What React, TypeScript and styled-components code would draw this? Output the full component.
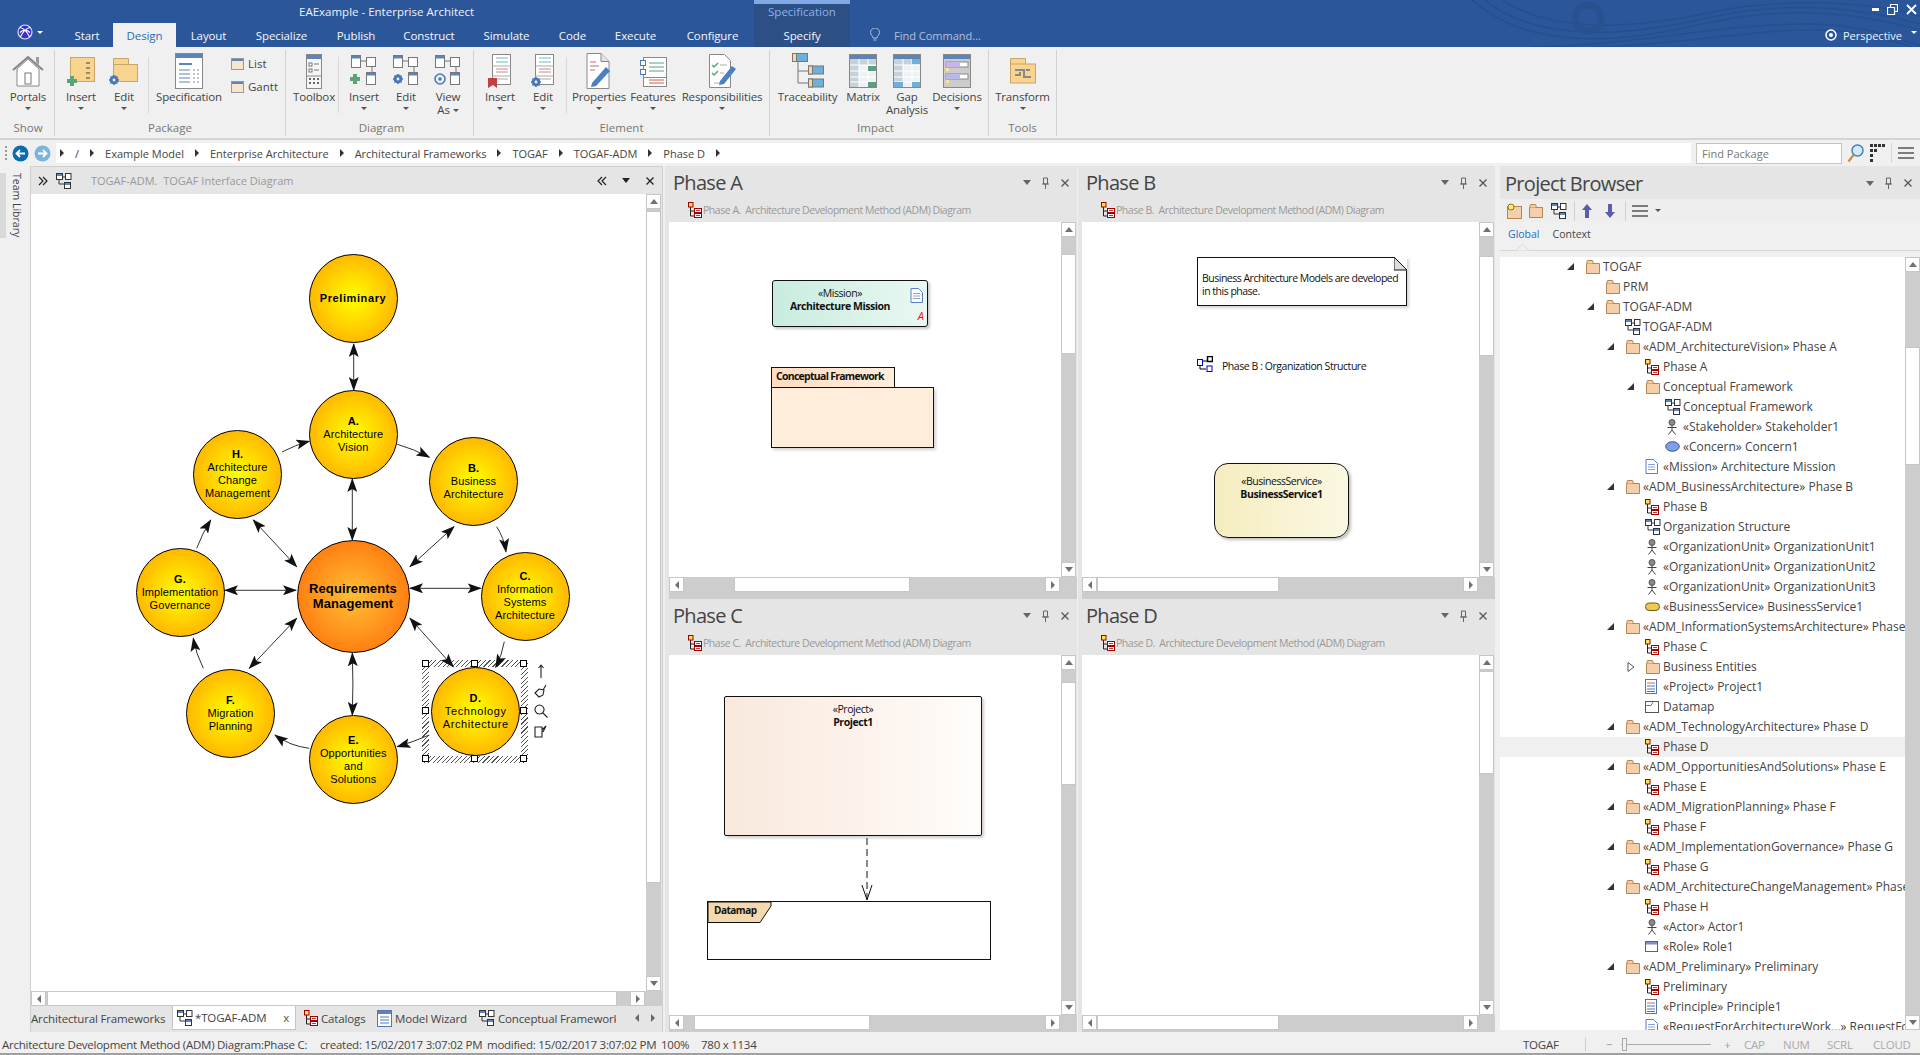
import React from "react";
import styled, { createGlobalStyle } from "styled-components";

const Global = createGlobalStyle`
  html, body {
    margin: 0;
    padding: 0;
    height: 100%;
    overflow: hidden;
    background: #f0f0f0;
    font-family: "Open Sans", "Noto Sans", sans-serif;
    font-size: 11.5px;
    color: #444;
  }
  * { box-sizing: border-box; }
  svg { display: block; flex-shrink: 0; }
`;

const Page = styled.div`
  width: 1920px;
  height: 1055px;
  display: flex;
  flex-direction: column;
  overflow: hidden;
`;

/* ---------- title bar ---------- */
const TitleBar = styled.div`
  position: relative;
  height: 47px;
  background: #2b579a;
  color: #fff;
  flex-shrink: 0;
`;
const Waves = styled.svg`
  position: absolute;
  right: 0;
  top: 0;
`;
const TitleRow = styled.div`
  position: relative;
  display: grid;
  grid-template-columns: 754px 96px 1fr;
  height: 23px;
`;
const AppTitle = styled.div`
  padding-left: 299px;
  line-height: 23px;
  font-size: 11.5px;
  color: #eef2f8;
`;
const ContextLabel = styled.div`
  background: #2c4f85;
  border-top: 4px solid #7fa8e4;
  text-align: center;
  line-height: 15px;
  font-size: 11.5px;
  color: #8fb2ea;
`;
const WindowButtons = styled.div`
  display: flex;
  justify-content: flex-end;
  align-items: center;
  gap: 8px;
  padding-right: 3px;
  height: 19px;
`;
const TabRow = styled.div`
  position: relative;
  display: flex;
  height: 24px;
`;
const LogoBox = styled.div`
  width: 61px;
  display: flex;
  padding-left: 17px;
  padding-top: 1px;
  gap: 4px;
`;
const LogoCaret = styled.div`
  width: 0;
  height: 0;
  margin-top: 7px;
  border-left: 3px solid transparent;
  border-right: 3px solid transparent;
  border-top: 3px solid #fff;
`;
const RibbonTab = styled.div<{ $w: number; $active?: boolean; $context?: boolean }>`
  width: ${(p) => p.$w}px;
  text-align: center;
  line-height: 26px;
  font-size: 11.5px;
  letter-spacing: -0.1px;
  color: ${(p) => (p.$active ? "#2b6cb8" : "#f4f6fa")};
  background: ${(p) => (p.$active ? "#f0f0f0" : p.$context ? "#2c4f85" : "transparent")};
`;
const FindCommand = styled.div`
  display: flex;
  align-items: center;
  gap: 14px;
  padding-left: 20px;
  color: #b3c0d8;
  font-size: 11px;
`;
const Perspective = styled.div`
  margin-left: auto;
  display: flex;
  align-items: center;
  gap: 6px;
  padding-right: 3px;
  font-size: 11px;
  color: #eef2f8;
`;
const PerspectiveCaret = styled(LogoCaret)`
  margin: -6px 0 0 3px;
`;

/* ---------- ribbon ---------- */
const Ribbon = styled.div`
  height: 93px;
  flex-shrink: 0;
  display: flex;
  padding-top: 3px;
  background: #f0f0f0;
  border-bottom: 2px solid #d4d4d4;
`;
const Group = styled.div<{ $pad?: number; $end?: number }>`
  height: 86px;
  display: flex;
  flex-direction: column;
  border-right: 1px solid #d2d2d2;
  padding-left: ${(p) => p.$pad ?? 0}px;
  padding-right: ${(p) => p.$end ?? 0}px;
`;
const GroupBody = styled.div`
  flex: 1;
  display: flex;
`;
const GroupLabel = styled.div`
  height: 12px;
  line-height: 12px;
  margin-bottom: 2px;
  text-align: center;
  font-size: 11.5px;
  color: #777;
`;
const InnerRule = styled.div<{ $gap?: number }>`
  width: 1px;
  height: 56px;
  margin-top: 7px;
  margin-left: ${(p) => p.$gap ?? 0}px;
  background: #d8d8d8;
`;
const ToolButton = styled.div<{ $w: number }>`
  width: ${(p) => p.$w}px;
  display: flex;
  flex-direction: column;
  align-items: center;
  padding-top: 5px;
`;
const IconSlot = styled.div`
  height: 32px;
  display: flex;
  align-items: center;
  justify-content: center;
`;
const ToolLabel = styled.div`
  margin-top: 3px;
  text-align: center;
  line-height: 13px;
  font-size: 11.5px;
  letter-spacing: -0.15px;
  white-space: nowrap;
`;
const Caret = styled.div`
  width: 0;
  height: 0;
  margin-top: 4px;
  border-left: 3px solid transparent;
  border-right: 3px solid transparent;
  border-top: 3px solid #555;
`;
const InlineCaret = styled(Caret)`
  display: inline-block;
  margin: 0 0 2px 3px;
`;
const SmallTools = styled.div`
  width: 56px;
  display: flex;
  flex-direction: column;
  padding-top: 2px;
`;
const SmallTool = styled.div`
  height: 23px;
  display: flex;
  align-items: center;
  gap: 4px;
  padding-left: 2px;
`;

/* ---------- breadcrumb bar ---------- */
const AddressBar = styled.div`
  height: 26px;
  flex-shrink: 0;
  display: flex;
  align-items: center;
  background: #f0f0f0;
`;
const Grip = styled.div`
  width: 2px;
  height: 14px;
  margin: 0 5px 0 5px;
  background: repeating-linear-gradient(to bottom, #9a9a9a 0 2px, transparent 2px 4px);
`;
const NavButtons = styled.div`
  width: 44px;
  display: flex;
  gap: 5px;
`;
const Crumbs = styled.div`
  width: 1635px;
  height: 20px;
  display: flex;
  align-items: center;
  gap: 11px;
  padding-left: 4px;
  background: #fff;
  font-size: 11px;
`;
const CrumbArrow = styled.div`
  width: 0;
  height: 0;
  border-top: 4px solid transparent;
  border-bottom: 4px solid transparent;
  border-left: 4px solid #333;
`;
const FindBox = styled.div`
  width: 146px;
  height: 21px;
  margin-left: 5px;
  padding-left: 5px;
  line-height: 19px;
  background: #fff;
  border: 1px solid #c4c4c4;
  color: #777;
  font-size: 11px;
`;
const AddressTools = styled.div`
  display: flex;
  align-items: center;
  gap: 6px;
  padding-left: 5px;
`;
const AddressRule = styled.div`
  width: 1px;
  height: 20px;
  background: #d6d6d6;
`;

/* ---------- workspace ---------- */
const Workspace = styled.div`
  height: 866px;
  flex-shrink: 0;
  display: flex;
`;
const SideRail = styled.div`
  width: 30px;
  flex-shrink: 0;
  display: flex;
  padding-top: 7px;
`;
const RailStrip = styled.div`
  width: 6px;
  height: 65px;
  background: #d9d9d9;
`;
const RailText = styled.div`
  writing-mode: vertical-rl;
  height: 70px;
  margin-left: 5px;
  line-height: 12px;
  font-size: 10.5px;
  color: #444;
  white-space: nowrap;
`;
const DiagramPanel = styled.div`
  width: 633px;
  flex-shrink: 0;
  display: flex;
  flex-direction: column;
  background: #e5e5e5;
  border: 1px solid #cfcfcf;
  border-bottom: none;
  padding-bottom: 2px;
`;
const DiagramHeader = styled.div`
  height: 27px;
  flex-shrink: 0;
  display: flex;
  align-items: center;
  padding-left: 7px;
  color: #999;
`;
const HeaderIcon = styled.div`
  margin-left: 8px;
`;
const HeaderPath = styled.span`
  margin-left: 19px;
  font-size: 11px;
  white-space: pre;
`;
const HeaderEnd = styled.div`
  margin-left: auto;
  display: flex;
  align-items: center;
  gap: 15px;
  padding-right: 7px;
`;
const DiagramBody = styled.div`
  flex: 1;
  min-height: 0;
  display: flex;
  padding-right: 1px;
`;
const MainCanvas = styled.div`
  position: relative;
  flex: 1;
  background: #fff;
  overflow: hidden;
`;
const ArrowLayer = styled.svg`
  position: absolute;
  left: 0;
  top: 0;
`;
const Bubble = styled.div<{ $x: number; $y: number; $d: number; $core?: boolean }>`
  position: absolute;
  left: ${(p) => p.$x - 31 - p.$d / 2}px;
  top: ${(p) => p.$y - 194 - p.$d / 2}px;
  width: ${(p) => p.$d}px;
  height: ${(p) => p.$d}px;
  padding-bottom: ${(p) => (p.$core ? 2 : 0)}px;
  border-radius: 50%;
  border: 1px solid #000;
  background: ${(p) =>
    p.$core
      ? "radial-gradient(circle closest-side, #ffc035 0%, #ff8012 100%)"
      : "radial-gradient(circle closest-side, #ffff00 0%, #ffb900 100%)"};
  display: flex;
  flex-direction: column;
  align-items: center;
  justify-content: center;
  font-family: "Liberation Sans", Arial, sans-serif;
  font-size: ${(p) => (p.$core ? 13 : 11)}px;
  line-height: ${(p) => (p.$core ? 15 : 13)}px;
  color: #000;
`;
const BubbleLine = styled.div<{ $bold?: boolean; $wide?: boolean }>`
  font-weight: ${(p) => (p.$bold ? 700 : 400)};
  letter-spacing: ${(p) => (p.$wide ? 0.6 : 0.1)}px;
  white-space: nowrap;
`;
const SelectionFrame = styled.div`
  position: absolute;
  left: 391px;
  top: 466px;
  width: 106px;
  height: 103px;
  background: repeating-linear-gradient(135deg, #555 0 0.8px, #fff 0.8px 3.2px);
  &::after {
    content: "";
    position: absolute;
    inset: 7px;
    background: #fff;
  }
`;
const Handle = styled.div<{ $x: number; $y: number }>`
  position: absolute;
  left: ${(p) => p.$x - 31 - 4}px;
  top: ${(p) => p.$y - 194 - 4}px;
  width: 7px;
  height: 7px;
  background: #fff;
  border: 1px solid #000;
`;
const QuickTools = styled.div`
  position: absolute;
  left: 503px;
  top: 470px;
  display: flex;
  flex-direction: column;
  gap: 6px;
`;
const DocTabs = styled.div`
  height: 24px;
  flex-shrink: 0;
  display: flex;
  align-items: stretch;
  color: #444;
  font-size: 11.5px;
  letter-spacing: -0.15px;
`;
const DocTab = styled.div<{ $w: number; $active?: boolean; $pad?: number }>`
  width: ${(p) => p.$w}px;
  flex-shrink: 0;
  display: flex;
  align-items: center;
  gap: ${(p) => (p.$active ? 2 : 3)}px;
  white-space: nowrap;
  overflow: hidden;
  padding-left: ${(p) => p.$pad ?? 0}px;
  background: ${(p) => (p.$active ? "#fff" : "transparent")};
  border: ${(p) => (p.$active ? "1px solid #c4c4c4" : "none")};
  border-top: none;
`;
const DocTabClose = styled.span`
  margin-left: auto;
  padding-right: 6px;
  color: #555;
`;
const TabArrows = styled.div`
  margin-left: auto;
  display: flex;
  align-items: center;
  gap: 12px;
  padding-right: 7px;
`;

/* ---------- phases ---------- */
const PhaseGrid = styled.div`
  width: 830px;
  margin-left: 2px;
  flex-shrink: 0;
  display: grid;
  grid-template-columns: 412px 417px;
  grid-template-rows: 433px 433px;
  column-gap: 1px;
`;
const PhasePanel = styled.div`
  display: flex;
  flex-direction: column;
  background: #e5e5e5;
`;
const PanelCore = styled.div<{ $bottom: number }>`
  flex: 1;
  min-height: 0;
  display: flex;
  flex-direction: column;
  margin-left: 4px;
  background: #cdcdcd;
  padding-bottom: ${(p) => p.$bottom}px;
`;
const PanelTitleRow = styled.div<{ $left: number }>`
  height: 31px;
  flex-shrink: 0;
  display: flex;
  align-items: center;
  padding: 2px 7px 0 ${(p) => p.$left}px;
  background: #e5e5e5;
`;
const PanelTitle = styled.div`
  font-size: 20px;
  letter-spacing: -0.7px;
  color: #444;
`;
const PanelControls = styled.div`
  margin-left: auto;
  display: flex;
  align-items: center;
  gap: 10px;
`;
const PanelSub = styled.div`
  height: 25px;
  flex-shrink: 0;
  display: flex;
  align-items: center;
  gap: 1px;
  padding-left: 23px;
  background: #e5e5e5;
  color: #999;
  font-size: 10.5px;
  letter-spacing: -0.47px;
  white-space: pre;
`;
const PanelBody = styled.div`
  flex: 1;
  min-height: 0;
  display: flex;
  padding-right: 1px;
  background: #e5e5e5;
`;
const PhaseCanvas = styled.div`
  position: relative;
  flex: 1;
  background: #fff;
  overflow: hidden;
`;
const VBar = styled.div`
  width: 15px;
  flex-shrink: 0;
  display: flex;
  flex-direction: column;
  background: #cdcdcd;
`;
const HBar = styled.div`
  height: 15px;
  flex-shrink: 0;
  display: flex;
  background: #cdcdcd;
`;
const ScrollButton = styled.div`
  width: 15px;
  height: 15px;
  flex-shrink: 0;
  display: flex;
  align-items: center;
  justify-content: center;
  background: #fff;
  border: 1px solid #c6c6c6;
`;
const VThumb = styled.div<{ $gap: number; $size: number }>`
  margin-top: ${(p) => p.$gap}px;
  height: ${(p) => p.$size}px;
  background: #fff;
  border: 1px solid #c6c6c6;
`;
const HThumb = styled.div<{ $gap: number; $size: number }>`
  margin-left: ${(p) => p.$gap}px;
  width: ${(p) => p.$size}px;
  background: #fff;
  border: 1px solid #c6c6c6;
`;
const Fill = styled.div`
  flex: 1;
`;
const HCorner = styled.div`
  width: 17px;
  flex-shrink: 0;
`;
const Tri = styled.div<{ $dir: "up" | "down" | "left" | "right"; $color?: string }>`
  width: 0;
  height: 0;
  ${(p) => {
    const c = p.$color ?? "#707070";
    if (p.$dir === "up") return `border-left:4px solid transparent;border-right:4px solid transparent;border-bottom:5px solid ${c};`;
    if (p.$dir === "down") return `border-left:4px solid transparent;border-right:4px solid transparent;border-top:5px solid ${c};`;
    if (p.$dir === "left") return `border-top:4px solid transparent;border-bottom:4px solid transparent;border-right:4px solid ${c};`;
    return `border-top:4px solid transparent;border-bottom:4px solid transparent;border-left:4px solid ${c};`;
  }}
`;

/* ---------- diagram elements ---------- */
const nodeText = `
  font-size: 10.5px;
  letter-spacing: -0.45px;
  color: #111;
  line-height: 13px;
`;
const Stereotype = styled.div`
  ${nodeText}
  text-align: center;
`;
const ElementName = styled.div`
  ${nodeText}
  font-weight: 700;
  text-align: center;
`;
const MissionBox = styled.div`
  position: absolute;
  left: 103px;
  top: 58px;
  width: 156px;
  height: 47px;
  padding: 6px 20px 0 0;
  border: 1px solid #111;
  border-radius: 3px;
  background: linear-gradient(to right, #c9ecdf, #e9f8f2);
  box-shadow: 2px 2px 3px rgba(0, 0, 0, 0.22);
`;
const MissionDoc = styled.div`
  position: absolute;
  right: 4px;
  top: 7px;
`;
const MissionFlag = styled.div`
  position: absolute;
  right: 3px;
  bottom: 4px;
  font-size: 11px;
  line-height: 12px;
  font-style: italic;
  color: #e11;
`;
const PackageTab = styled.div`
  position: absolute;
  left: 102px;
  top: 145px;
  width: 124px;
  height: 21px;
  padding-left: 4px;
  border: 1px solid #111;
  background: linear-gradient(to right, #ffdcbf, #ffeedd);
  ${nodeText}
  font-weight: 700;
  letter-spacing: -0.72px;
  line-height: 16px;
`;
const PackageBody = styled.div`
  position: absolute;
  left: 102px;
  top: 165px;
  width: 163px;
  height: 61px;
  border: 1px solid #111;
  background: #ffeddc;
  box-shadow: 2px 2px 3px rgba(0, 0, 0, 0.18);
`;
const NoteBox = styled.div`
  position: absolute;
  left: 115px;
  top: 35px;
  width: 210px;
  height: 49px;
  padding: 14px 4px 0 4px;
  border: 1px solid #111;
  background: #fff;
  box-shadow: 2px 2px 3px rgba(0, 0, 0, 0.18);
  ${nodeText}
  letter-spacing: -0.5px;
  white-space: nowrap;
`;
const NoteFold = styled.svg`
  position: absolute;
  right: -1px;
  top: -1px;
`;
const DiagramLink = styled.div`
  position: absolute;
  left: 115px;
  top: 133px;
  display: flex;
  align-items: center;
  gap: 9px;
  ${nodeText}
`;
const LinkText = styled.span`
  padding-top: 5px;
`;
const ServiceBox = styled.div`
  position: absolute;
  left: 132px;
  top: 241px;
  width: 135px;
  height: 75px;
  padding-top: 11px;
  border: 1px solid #111;
  border-radius: 14px;
  background: linear-gradient(to right, #f5edc0, #fbf8e2);
  box-shadow: 2px 2px 3px rgba(0, 0, 0, 0.25);
`;
const ProjectBox = styled.div`
  position: absolute;
  left: 55px;
  top: 41px;
  width: 258px;
  height: 140px;
  padding-top: 6px;
  border: 1px solid #111;
  border-radius: 2px;
  background: linear-gradient(to right, #f9e8dc, #fffcfa);
  box-shadow: 2px 2px 3px rgba(0, 0, 0, 0.2);
`;
const ArtifactFrame = styled.div`
  position: absolute;
  left: 38px;
  top: 246px;
  width: 284px;
  height: 59px;
  border: 1px solid #111;
  background: #fff;
`;
const ArtifactTag = styled.svg`
  position: absolute;
  left: 0;
  top: 0;
`;
const ArtifactName = styled.div`
  position: absolute;
  left: 6px;
  top: 2px;
  ${nodeText}
  font-weight: 700;
  font-size: 10px;
  letter-spacing: -0.5px;
`;
const DependencyLine = styled.svg`
  position: absolute;
  left: 190px;
  top: 183px;
`;

/* ---------- project browser ---------- */
const Browser = styled.div`
  width: 420px;
  margin-left: 5px;
  flex-shrink: 0;
  display: flex;
  flex-direction: column;
  background: #f0f0f0;
  padding-bottom: 2px;
`;
const BrowserTitle = styled(PanelTitleRow)`
  height: 33px;
  padding-bottom: 1px;
`;
const BrowserTools = styled.div`
  height: 23px;
  flex-shrink: 0;
  display: flex;
  align-items: center;
  padding-left: 6px;
  background: #eeeeee;
`;
const ToolSlot = styled.div<{ $w: number }>`
  width: ${(p) => p.$w}px;
  flex-shrink: 0;
  display: flex;
  align-items: center;
  justify-content: center;
`;
const ToolRule = styled.div`
  width: 1px;
  height: 20px;
  background: #d0d0d0;
`;
const SmallCaret = styled(Caret)`
  margin-top: 0;
`;
const BrowserTabs = styled.div`
  height: 29px;
  flex-shrink: 0;
  position: relative;
  display: flex;
  align-items: center;
  gap: 13px;
  padding: 0 0 4px 8px;
  border-bottom: 1px solid #d6d6d6;
`;
const BrowserTab = styled.span<{ $active?: boolean }>`
  font-size: 10.5px;
  color: ${(p) => (p.$active ? "#1e6fc8" : "#444")};
`;
const TabNotch = styled.svg`
  position: absolute;
  left: 16px;
  bottom: -1px;
`;
const TreeArea = styled.div`
  flex: 1;
  min-height: 0;
  margin-top: 6px;
  display: flex;
  background: #fff;
`;
const Tree = styled.div`
  flex: 1;
  min-width: 0;
  overflow: hidden;
`;
const TreeRow = styled.div<{ $level: number; $current?: boolean }>`
  height: 20px;
  display: flex;
  align-items: center;
  padding-bottom: 1px;
  padding-left: ${(p) => 65 + p.$level * 20}px;
  background: ${(p) => (p.$current ? "#f0f0f0" : "transparent")};
  font-size: 12px;
  color: #444;
  white-space: nowrap;
`;
const ToggleSlot = styled.div`
  width: 20px;
  flex-shrink: 0;
  display: flex;
  padding-left: 2px;
`;
const NodeIcon = styled.div`
  width: 18px;
  flex-shrink: 0;
  display: flex;
`;
const OpenToggle = styled.div`
  width: 0;
  height: 0;
  border-left: 7px solid transparent;
  border-bottom: 7px solid #333;
`;

/* ---------- status bar ---------- */
const StatusBar = styled.div`
  height: 21px;
  flex-shrink: 0;
  display: flex;
  align-items: center;
  padding: 3px 0 0 2px;
  font-size: 11.5px;
  letter-spacing: -0.25px;
  color: #444;
  background: #f0f0f0;
  white-space: nowrap;
`;
const StatusCell = styled.div<{ $w: number; $muted?: boolean }>`
  width: ${(p) => p.$w}px;
  flex-shrink: 0;
  color: ${(p) => (p.$muted ? "#aaa" : "inherit")};
`;
const StatusRule = styled.div`
  width: 1px;
  height: 13px;
  margin-right: 20px;
  background: #ccc;
`;
const Zoomer = styled.div`
  width: 138px;
  display: flex;
  align-items: center;
  flex-shrink: 0;
  color: #999;
`;
const ZoomLine = styled.div`
  position: relative;
  width: 90px;
  height: 1px;
  margin: 0 13px 0 9px;
  background: #aaa;
`;
const ZoomThumb = styled.div`
  position: absolute;
  left: 1px;
  top: -6px;
  width: 5px;
  height: 13px;
  background: #f0f0f0;
  border: 1px solid #aaa;
`;
const BottomEdge = styled.div`
  height: 2px;
  flex-shrink: 0;
  background: #a0a0a0;
`;

/* ---------- icons ---------- */
const TreeFolder = () => (
  <svg width="16" height="14" viewBox="0 0 16 14">
    <path d="M1.5 13.5V3.5h13v10z" fill="#f5cfa9" stroke="#b5844f" />
    <path d="M2 3.5V1.5q0-1 1-1h4q1 0 1 1v2" fill="#f5cfa9" stroke="#b5844f" />
  </svg>
);
const TreeDiagram = () => (
  <svg width="16" height="16" viewBox="0 0 16 16">
    <path d="M5 4h5M3 7v4h5M12 7v0" stroke="#333" fill="none" />
    <rect x="0.5" y="0.5" width="6" height="6" fill="#fff" stroke="#333" />
    <rect x="1" y="1" width="5" height="2" fill="#5b85c8" />
    <rect x="9.5" y="0.5" width="5.5" height="6" fill="#fff" stroke="#333" />
    <rect x="8.5" y="9.5" width="6" height="6" fill="#fff" stroke="#333" />
    <rect x="9" y="10" width="5" height="2" fill="#5b85c8" />
  </svg>
);
const RedTree = () => (
  <svg width="14" height="16" viewBox="0 0 14 16">
    <path d="M2.5 5v9h4M2.5 9h4" fill="none" stroke="#222" />
    <rect x="0.5" y="0.5" width="4.5" height="4.5" fill="#ffe34d" stroke="#a00000" />
    <rect x="6.5" y="6.5" width="7" height="4" fill="#fff" stroke="#a00000" />
    <rect x="6.5" y="11.5" width="7" height="4" fill="#fff" stroke="#a00000" />
    <path d="M8 8.5h4M8 13.5h4" stroke="#c33" />
  </svg>
);
const ActorIcon = () => (
  <svg width="14" height="16" viewBox="0 0 14 16">
    <circle cx="7" cy="3.5" r="3" fill="#8a8a8a" stroke="#555" />
    <path d="M7 6.500V11M2.500 8.500h9M7 11l-3.500 4.500M7 11l3.500 4.500" stroke="#444" fill="none" />
  </svg>
);
const EllipseIcon = () => (
  <svg width="15" height="11" viewBox="0 0 15 11">
    <ellipse cx="7.5" cy="5.5" rx="6.8" ry="4.8" fill="#7f9fe4" stroke="#3a4fa0" />
  </svg>
);
const PillIcon = () => (
  <svg width="15" height="11" viewBox="0 0 15 11">
    <rect x="0.5" y="2" width="14" height="7.5" rx="3.7" fill="#f0c850" stroke="#6a5a20" />
  </svg>
);
const DocIcon = () => (
  <svg width="13" height="15" viewBox="0 0 13 15">
    <path d="M1 .5h7.500l4 4v10H1z" fill="#fff" stroke="#5b7fc4" />
    <path d="M3 5.500h7M3 8h7M3 10.500h7" stroke="#8aa4d8" />
  </svg>
);
const ListDocIcon = () => (
  <svg width="12" height="15" viewBox="0 0 12 15">
    <rect x="0.5" y="0.5" width="11" height="14" fill="#fff" stroke="#4a78c0" />
    <path d="M2 4h8" stroke="#c66" />
    <path d="M2 7h8M2 10h8M2 12.500h8" stroke="#4a78c0" />
  </svg>
);
const WizardIcon = () => (
  <svg width="15" height="17" viewBox="0 0 15 17">
    <rect x="0.5" y="0.5" width="14" height="16" fill="#fff" stroke="#4a78c0" />
    <rect x="1" y="1" width="13" height="3" fill="#6a7fb0" />
    <path d="M3 7h9M3 10h9M3 13h9" stroke="#4a78c0" />
  </svg>
);
const FrameIcon = () => (
  <svg width="14" height="12" viewBox="0 0 14 12">
    <rect x="0.5" y="0.5" width="13" height="11" fill="#fff" stroke="#555" />
    <path d="M1 4.500h5l2-3.500" fill="none" stroke="#777" />
  </svg>
);
const RoleIcon = () => (
  <svg width="14" height="12" viewBox="0 0 14 12">
    <rect x="0.5" y="0.5" width="12" height="10" fill="#fff" stroke="#4a60a8" />
    <rect x="1" y="1" width="11" height="2.5" fill="#7f8fd0" />
  </svg>
);

const HouseIcon = () => (
  <svg width="32" height="32" viewBox="0 0 32 32">
    <path d="M5 14v17h22V14L16 4z" fill="#fff" stroke="#888" />
    <path d="M1 15 16 2l15 13" fill="none" stroke="#858585" strokeWidth="2" />
    <path d="M24 7V2h3v8" fill="#9a9a9a" />
    <rect x="13" y="18" width="6" height="11" fill="none" stroke="#777" />
  </svg>
);
const Plus = ({ x, y }: { x: number; y: number }) => (
  <path d={`M${x + 3} ${y}h4v3h3v4h-3v3h-4v-3h-3v-4h3z`} fill="#5ba47a" />
);
const Gear = ({ x, y }: { x: number; y: number }) => (
  <g>
    <circle cx={x + 5} cy={y + 5} r="3.2" fill="none" stroke="#4a78b8" strokeWidth="2.4" />
    <path d={`M${x + 5} ${y}v10M${x} ${y + 5}h10M${x + 1.5} ${y + 1.5}l7 7M${x + 8.5} ${y + 1.5}l-7 7`} stroke="#4a78b8" strokeWidth="1.4" />
    <circle cx={x + 5} cy={y + 5} r="1.4" fill="#f0f0f0" />
  </g>
);
const PackageAdd = () => (
  <svg width="28" height="30" viewBox="0 0 28 30">
    <rect x="3.5" y="1.5" width="24" height="24" fill="#f9d48f" stroke="#c7a66c" />
    <path d="M19 7h4M19 12h4M19 17h4M19 22h4" stroke="#9a8a6a" strokeWidth="2" />
    <Plus x={0} y={20} />
  </svg>
);
const PackageEdit = () => (
  <svg width="30" height="30" viewBox="0 0 30 30">
    <path d="M4.500 8V2.500h15V8" fill="#f9d48f" stroke="#c7a66c" />
    <rect x="4.5" y="8.5" width="24" height="17" fill="#f9d48f" stroke="#c7a66c" />
    <Gear x={0} y={19} />
  </svg>
);
const SpecIcon = () => (
  <svg width="28" height="36" viewBox="0 0 28 36">
    <rect x="0.5" y="0.5" width="27" height="35" fill="#fff" stroke="#888" />
    <rect x="1" y="1" width="26" height="4" fill="#5b85b8" />
    <path d="M4 11h13" stroke="#5b85b8" strokeWidth="2" />
    <path d="M4 17h11M4 21h11M4 25h11M4 29h11" stroke="#5b85b8" />
    <path d="M18 17h2M22 17h2M18 21h2M22 21h2M18 25h2M22 25h2M18 29h2M22 29h2" stroke="#888" />
  </svg>
);
const MiniWindow = () => (
  <svg width="13" height="12" viewBox="0 0 13 12">
    <rect x="0.5" y="0.5" width="12" height="11" fill="#f5e6cc" stroke="#999" />
    <rect x="1" y="1" width="11" height="2" fill="#5b85b8" />
  </svg>
);
const ToolboxIcon = () => (
  <svg width="16" height="35" viewBox="0 0 16 35">
    <rect x="0.5" y="0.5" width="15" height="34" fill="#f5f5f5" stroke="#888" />
    <rect x="1" y="1" width="14" height="4" fill="#5b85b8" />
    <rect x="3" y="9" width="3" height="3" fill="#fff" stroke="#777" />
    <rect x="3" y="15" width="3" height="3" fill="#fff" stroke="#777" />
    <path d="M8 10h5M8 16h5" stroke="#777" />
    <path d="M1 22h14" stroke="#888" />
    <path d="M3 25h2M7 25h2M11 25h2M3 29h2M7 29h2M11 29h2" stroke="#666" strokeWidth="2" />
  </svg>
);
const DiagramBig = ({ children }: { children?: React.ReactNode }) => (
  <svg width="28" height="32" viewBox="0 0 28 32">
    <path d="M10 6h6M22 12v5" stroke="#777" fill="none" />
    <rect x="1.5" y="0.5" width="9" height="12" fill="#fff" stroke="#777" />
    <rect x="2" y="1" width="8" height="2.5" fill="#5b85b8" />
    <rect x="16.5" y="2.5" width="9" height="9" fill="#fff" stroke="#777" />
    <rect x="16.5" y="17.5" width="9" height="12" fill="#fff" stroke="#777" />
    <rect x="17" y="18" width="8" height="2.5" fill="#5b85b8" />
    {children}
  </svg>
);
const Target = () => (
  <g>
    <circle cx="6" cy="24" r="5" fill="none" stroke="#4a78b8" strokeWidth="1.6" />
    <circle cx="6" cy="24" r="1.8" fill="#4a78b8" />
  </g>
);
const ElementBig = ({ children }: { children?: React.ReactNode }) => (
  <svg width="24" height="34" viewBox="0 0 24 34">
    <rect x="4.5" y="0.5" width="18" height="30" fill="#fff" stroke="#888" />
    <path d="M4.500 12h18M4.500 22h18" stroke="#aaa" />
    <path d="M8 4h12M8 8h12" stroke="#70b8c0" />
    <path d="M8 15h12M8 18h12" stroke="#c88" />
    <path d="M8 25h12" stroke="#aaa" />
    {children}
  </svg>
);
const PropertiesIcon = () => (
  <svg width="26" height="36" viewBox="0 0 26 36">
    <path d="M1 .5h14l8 8v27H1z" fill="#fff" stroke="#888" />
    <path d="M15 .5v8h8" fill="#e4e4e4" stroke="#888" />
    <path d="M4 9h6M4 13h9M4 17h5" stroke="#c66" />
    <path d="M6 30 20 14l4 4L10 33l-5 1z" fill="#4a80c0" />
  </svg>
);
const FeaturesIcon = () => (
  <svg width="27" height="33" viewBox="0 0 27 33">
    <rect x="3.5" y="2.5" width="23" height="29" fill="#fff" stroke="#888" />
    <path d="M3.500 22.500h23" stroke="#888" />
    <path d="M9 8h15M9 12h15M9 16h15" stroke="#5ba47a" />
    <path d="M9 25h15M9 28h15" stroke="#d0604a" />
    <rect x="0.5" y="5.5" width="5" height="5" fill="#fff" stroke="#4a78b8" />
    <rect x="0.5" y="14.5" width="5" height="5" fill="#fff" stroke="#4a78b8" />
  </svg>
);
const ResponsIcon = () => (
  <svg width="27" height="34" viewBox="0 0 27 34">
    <path d="M.5.5h15l6 6v27H.5z" fill="#fff" stroke="#888" />
    <path d="M3 11l2 2 4-4M3 19l2 2 4-4" fill="none" stroke="#5ba47a" strokeWidth="1.5" />
    <path d="M11 11h7M11 19h4M5 29h10" stroke="#aaa" />
    <path d="M11 27 23 12l4 3L15 30l-5 1z" fill="#4a80c0" />
  </svg>
);
const TraceIcon = () => (
  <svg width="32" height="36" viewBox="0 0 32 36">
    <path d="M6 9v21h10M6 18h10" fill="none" stroke="#777" />
    <rect x="0.5" y="0.5" width="15" height="8" fill="#6fb0d8" stroke="#777" />
    <rect x="0.5" y="0.5" width="4" height="8" fill="#f5d9a0" stroke="#777" />
    <rect x="16.5" y="13" width="15" height="8" fill="#6fb0d8" stroke="#777" />
    <rect x="16.5" y="13" width="4" height="8" fill="#f5d9a0" stroke="#777" />
    <rect x="16.5" y="26" width="15" height="8" fill="#6fb0d8" stroke="#777" />
    <rect x="16.5" y="26" width="4" height="8" fill="#f5d9a0" stroke="#777" />
  </svg>
);
const MatrixGrid = ({ mark, corner }: { mark: string; corner?: boolean }) => (
  <svg width="28" height="34" viewBox="0 0 28 34">
    <rect x="0.5" y="0.5" width="27" height="33" fill="#eef2f4" stroke="#888" />
    <rect x="1" y="1" width="26" height="4" fill="#5b85b8" />
    <rect x="1" y="5" width="26" height="6" fill="#c5d2da" />
    <rect x="1" y="5" width="9" height="28" fill="#c5d2da" />
    <path d="M10 5v28M19 5v28M1 11h26M1 17h26M1 23h26M1 28h26" stroke="#fff" />
    <rect x="19" y={corner ? 5 : 12} width="8" height="5" fill={mark} />
    <rect x="19" y="28" width="8" height="5" fill={mark} />
    {corner && <rect x="1" y="28" width="9" height="5" fill={mark} />}
  </svg>
);
const DecisionIcon = () => (
  <svg width="28" height="34" viewBox="0 0 28 34">
    <rect x="0.5" y="0.5" width="27" height="33" fill="#ccc" stroke="#888" />
    <rect x="1" y="1" width="26" height="4" fill="#5b85b8" />
    <rect x="3" y="8" width="22" height="5" fill="#fff" stroke="#888" />
    <rect x="3" y="8" width="14" height="5" fill="#c8b4e8" />
    <rect x="3" y="20" width="22" height="5" fill="#fff" stroke="#888" />
    <rect x="3" y="20" width="14" height="5" fill="#b8b8e8" />
    <rect x="3" y="14" width="3" height="3" fill="#f5e890" />
    <rect x="3" y="26" width="3" height="3" fill="#f5e890" />
  </svg>
);
const TransformIcon = () => (
  <svg width="26" height="26" viewBox="0 0 26 26">
    <path d="M.5 6V.5h15V6" fill="#f9d48f" stroke="#c7a66c" />
    <rect x="0.5" y="6" width="25" height="19" fill="#f9d48f" stroke="#c7a66c" />
    <path d="M5 12h9v7h7M5 17h5v-3M16 12h4" fill="none" stroke="#888" strokeWidth="2" />
  </svg>
);
const LogoIcon = () => (
  <svg width="16" height="16" viewBox="0 0 16 16">
    <circle cx="8" cy="8" r="7" fill="#3a2fd0" stroke="#d8e4ff" strokeWidth="1.2" />
    <path d="M3 3.500c6 1.500 8 6 9.500 9.500M13 3.500c-6 1.500-8 6-9.500 9.500M3 8.500c3-3 7-3 10 0" stroke="#fff" strokeWidth="1.2" fill="none" />
  </svg>
);
const BulbIcon = () => (
  <svg width="10" height="14" viewBox="0 0 10 14">
    <path d="M3 10c0-2-2.500-3-2.500-5.500a4.500 4.500 0 0 1 9 0C9.500 7 7 8 7 10zM3.500 12h3" fill="none" stroke="#b3c0d8" />
  </svg>
);
const SmallClose = ({ color = "#555" }: { color?: string }) => (
  <svg width="10" height="10" viewBox="0 0 10 10">
    <path d="M1.500 1.500l7 7M8.500 1.500l-7 7" stroke={color} strokeWidth="1.3" />
  </svg>
);
const PinIcon = () => (
  <svg width="9" height="12" viewBox="0 0 9 12">
    <path d="M2.500 1h4v6h-4zM1 7h7M4.500 7v5" fill="none" stroke="#666" />
  </svg>
);
const DropTri = () => <Tri $dir="down" $color="#666" />;
const DoubleRight = () => (
  <svg width="10" height="10" viewBox="0 0 10 10">
    <path d="M1 1l4 4-4 4M5 1l4 4-4 4" fill="none" stroke="#222" strokeWidth="1.2" />
  </svg>
);
const DoubleLeft = () => (
  <svg width="10" height="10" viewBox="0 0 10 10">
    <path d="M9 1 5 5l4 4M5 1 1 5l4 4" fill="none" stroke="#222" strokeWidth="1.2" />
  </svg>
);
const NavCircle = ({ light }: { light?: boolean }) => (
  <svg width="17" height="17" viewBox="0 0 17 17">
    <circle cx="8.5" cy="8.5" r="8" fill={light ? "#7cb4dc" : "#0a6cb0"} />
    {light ? (
      <path d="M4 8.500h8M9 5l3.500 3.500L9 12" fill="none" stroke="#fff" strokeWidth="1.8" />
    ) : (
      <path d="M13 8.500H5M8 5 4.500 8.500 8 12" fill="none" stroke="#fff" strokeWidth="1.8" />
    )}
  </svg>
);
const Magnifier = () => (
  <svg width="17" height="19" viewBox="0 0 17 19">
    <circle cx="10.5" cy="6.5" r="5.5" fill="#d5e8f8" stroke="#3a7fc0" strokeWidth="1.4" />
    <path d="M6.500 11 1.500 17.500" stroke="#c8913a" strokeWidth="2.2" />
  </svg>
);
const DotsIcon = () => (
  <svg width="15" height="18" viewBox="0 0 15 18">
    <path d="M0 0h3v3H0zM4 0h3v3H4zM8 0h3v3H8zM12 0h3v3h-3zM0 5h3v3H0zM4 5h3v3H4zM0 10h3v3H0zM0 15h3v3H0z" fill="#333" />
  </svg>
);
const BurgerIcon = () => (
  <svg width="16" height="12" viewBox="0 0 16 12">
    <path d="M0 1h16M0 6h16M0 11h16" stroke="#555" strokeWidth="1.6" />
  </svg>
);
const NewFolderIcon = () => (
  <svg width="16" height="16" viewBox="0 0 16 16">
    <rect x="0.5" y="3.5" width="14" height="12" fill="#f5cfa9" stroke="#b5844f" />
    <circle cx="4" cy="4" r="3" fill="#ffee66" stroke="#887722" />
  </svg>
);
const UpArrow = () => (
  <svg width="10" height="14" viewBox="0 0 10 14">
    <path d="M5 0l5 6H7v8H3V6H0z" fill="#5a5ea8" />
  </svg>
);
const DownArrow = () => (
  <svg width="10" height="14" viewBox="0 0 10 14">
    <path d="M5 14 0 8h3V0h4v8h3z" fill="#5a5ea8" />
  </svg>
);
const QuickIcon = ({ d }: { d: string }) => (
  <svg width="14" height="14" viewBox="0 0 14 14">
    <path d={d} fill="none" stroke="#222" strokeWidth="1.1" />
  </svg>
);

const arrows: { d: string; both?: boolean }[] = [
  { d: "M353.7 344 L353.7 390", both: true },
  { d: "M352.3 479 L352.3 540", both: true },
  { d: "M282 452 Q295 445 309.3 441.3" },
  { d: "M397.3 444.3 Q414 449 429.3 457.3" },
  { d: "M454 526.7 L410 566.7", both: true },
  { d: "M496.7 526.7 Q504 538 506 551.7" },
  { d: "M504.3 641.7 Q502 655 495.7 667.3" },
  { d: "M410 588.3 L480.7 588.3", both: true },
  { d: "M410 618.3 L453.3 666.7", both: true },
  { d: "M429.3 735 Q413 742 397.3 746.7" },
  { d: "M352.3 653.3 Q353.5 684 352.3 715", both: true },
  { d: "M309.3 748.3 Q290 746 275 735" },
  { d: "M249.3 668.3 L296.7 618.3", both: true },
  { d: "M203.3 668.3 Q196 654 193.3 638.3" },
  { d: "M225 590.3 L296 590.3", both: true },
  { d: "M196.7 548.3 Q202 534 210.7 520" },
  { d: "M253.3 520 L296.7 566.7", both: true },
];

const bubbles: { x: number; y: number; lines: string[]; wide?: boolean; big?: boolean }[] = [
  { x: 353, y: 298, lines: ["Preliminary"], big: true },
  { x: 353.3, y: 434.5, lines: ["A.", "Architecture", "Vision"] },
  { x: 237.5, y: 474, lines: ["H.", "Architecture", "Change", "Management"] },
  { x: 473.5, y: 481, lines: ["B.", "Business", "Architecture"] },
  { x: 180, y: 592, lines: ["G.", "Implementation", "Governance"] },
  { x: 525, y: 596, lines: ["C.", "Information", "Systems", "Architecture"] },
  { x: 475.7, y: 711.7, lines: ["D.", "Technology", "Architecture"], wide: true },
  { x: 230.5, y: 713.5, lines: ["F.", "Migration", "Planning"] },
  { x: 353.3, y: 759.7, lines: ["E.", "Opportunities", "and", "Solutions"] },
];

const handles = [
  [426, 664], [475, 664], [524, 664],
  [426, 711], [524, 711],
  [426, 759], [475, 759], [524, 759],
];

type Kind = "folder" | "diagram" | "red" | "actor" | "ellipse" | "doc" | "pill" | "list" | "frame" | "role";
const kindIcon: Record<Kind, React.ReactElement> = {
  folder: <TreeFolder />,
  diagram: <TreeDiagram />,
  red: <RedTree />,
  actor: <ActorIcon />,
  ellipse: <EllipseIcon />,
  doc: <DocIcon />,
  pill: <PillIcon />,
  list: <ListDocIcon />,
  frame: <FrameIcon />,
  role: <RoleIcon />,
};

const treeRows: { l: number; k: Kind; t: string; open?: boolean; closed?: boolean; current?: boolean }[] = [
  { l: 0, k: "folder", t: "TOGAF", open: true },
  { l: 1, k: "folder", t: "PRM" },
  { l: 1, k: "folder", t: "TOGAF-ADM", open: true },
  { l: 2, k: "diagram", t: "TOGAF-ADM" },
  { l: 2, k: "folder", t: "«ADM_ArchitectureVision» Phase A", open: true },
  { l: 3, k: "red", t: "Phase A" },
  { l: 3, k: "folder", t: "Conceptual Framework", open: true },
  { l: 4, k: "diagram", t: "Conceptual Framework" },
  { l: 4, k: "actor", t: "«Stakeholder» Stakeholder1" },
  { l: 4, k: "ellipse", t: "«Concern» Concern1" },
  { l: 3, k: "doc", t: "«Mission» Architecture Mission" },
  { l: 2, k: "folder", t: "«ADM_BusinessArchitecture» Phase B", open: true },
  { l: 3, k: "red", t: "Phase B" },
  { l: 3, k: "diagram", t: "Organization Structure" },
  { l: 3, k: "actor", t: "«OrganizationUnit» OrganizationUnit1" },
  { l: 3, k: "actor", t: "«OrganizationUnit» OrganizationUnit2" },
  { l: 3, k: "actor", t: "«OrganizationUnit» OrganizationUnit3" },
  { l: 3, k: "pill", t: "«BusinessService» BusinessService1" },
  { l: 2, k: "folder", t: "«ADM_InformationSystemsArchitecture» Phase C", open: true },
  { l: 3, k: "red", t: "Phase C" },
  { l: 3, k: "folder", t: "Business Entities", closed: true },
  { l: 3, k: "list", t: "«Project» Project1" },
  { l: 3, k: "frame", t: "Datamap" },
  { l: 2, k: "folder", t: "«ADM_TechnologyArchitecture» Phase D", open: true },
  { l: 3, k: "red", t: "Phase D", current: true },
  { l: 2, k: "folder", t: "«ADM_OpportunitiesAndSolutions» Phase E", open: true },
  { l: 3, k: "red", t: "Phase E" },
  { l: 2, k: "folder", t: "«ADM_MigrationPlanning» Phase F", open: true },
  { l: 3, k: "red", t: "Phase F" },
  { l: 2, k: "folder", t: "«ADM_ImplementationGovernance» Phase G", open: true },
  { l: 3, k: "red", t: "Phase G" },
  { l: 2, k: "folder", t: "«ADM_ArchitectureChangeManagement» Phase H", open: true },
  { l: 3, k: "red", t: "Phase H" },
  { l: 3, k: "actor", t: "«Actor» Actor1" },
  { l: 3, k: "role", t: "«Role» Role1" },
  { l: 2, k: "folder", t: "«ADM_Preliminary» Preliminary", open: true },
  { l: 3, k: "red", t: "Preliminary" },
  { l: 3, k: "list", t: "«Principle» Principle1" },
  { l: 3, k: "doc", t: "«RequestForArchitectureWork...» RequestForArchitectureWork1" },
];

const VScroll = ({ gap, size }: { gap: number; size: number }) => (
  <VBar>
    <ScrollButton>
      <Tri $dir="up" />
    </ScrollButton>
    <VThumb $gap={gap} $size={size} />
    <Fill />
    <ScrollButton>
      <Tri $dir="down" />
    </ScrollButton>
  </VBar>
);
const HScroll = ({ gap, size }: { gap: number; size: number }) => (
  <HBar>
    <ScrollButton>
      <Tri $dir="left" />
    </ScrollButton>
    <HThumb $gap={gap} $size={size} />
    <Fill />
    <ScrollButton>
      <Tri $dir="right" />
    </ScrollButton>
    <HCorner />
  </HBar>
);

const PanelButtons = () => (
  <PanelControls>
    <DropTri />
    <PinIcon />
    <SmallClose />
  </PanelControls>
);

const Phase = ({
  name,
  bottom,
  v,
  h,
  children,
}: {
  name: string;
  bottom: number;
  v: [number, number];
  h: [number, number];
  children?: React.ReactNode;
}) => (
  <PhasePanel>
    <PanelTitleRow $left={8}>
      <PanelTitle>Phase {name}</PanelTitle>
      <PanelButtons />
    </PanelTitleRow>
    <PanelSub>
      <RedTree />
      {`Phase ${name}.  Architecture Development Method (ADM) Diagram`}
    </PanelSub>
    <PanelCore $bottom={bottom}>
      <PanelBody>
        <PhaseCanvas>{children}</PhaseCanvas>
        <VScroll gap={v[0]} size={v[1]} />
      </PanelBody>
      <HScroll gap={h[0]} size={h[1]} />
    </PanelCore>
  </PhasePanel>
);

const Tool = ({
  w,
  icon,
  lines,
  caret,
  inlineCaret,
}: {
  w: number;
  icon: React.ReactNode;
  lines: string[];
  caret?: boolean;
  inlineCaret?: boolean;
}) => (
  <ToolButton $w={w}>
    <IconSlot>{icon}</IconSlot>
    <ToolLabel>
      {lines.map((l, i) => (
        <div key={i}>
          {l}
          {inlineCaret && i === lines.length - 1 && <InlineCaret />}
        </div>
      ))}
    </ToolLabel>
    {caret && <Caret />}
  </ToolButton>
);

const tabs: [string, number][] = [
  ["Start", 52],
  ["Design", 63],
  ["Layout", 65],
  ["Specialize", 81],
  ["Publish", 68],
  ["Construct", 78],
  ["Simulate", 77],
  ["Code", 55],
  ["Execute", 71],
  ["Configure", 83],
];

const crumbs = ["/", "Example Model", "Enterprise Architecture", "Architectural Frameworks", "TOGAF", "TOGAF-ADM", "Phase D"];

const App = () => (
  <Page>
    <Global />
    <TitleBar>
      <Waves width="448" height="47" viewBox="0 0 448 47">
        <g fill="none" stroke="#24508f" strokeWidth="1.5">
          <path d="M0 0C50 45 130 48 230 24C300 8 370 8 448 30" />
          <path d="M12 0C60 38 140 40 235 18C305 2 375 4 448 24" />
          <path d="M30 0C75 30 150 32 240 12C300 0 380 -2 448 16" />
          <path d="M60 47C160 46 260 22 340 24C390 25 420 36 448 46" />
          <path d="M120 47C200 46 290 28 350 30C390 31 420 40 440 47" />
        </g>
        <circle cx="116" cy="18" r="13" fill="none" stroke="#27528f" strokeWidth="7" />
      </Waves>
      <TitleRow>
        <AppTitle>EAExample - Enterprise Architect</AppTitle>
        <ContextLabel>Specification</ContextLabel>
        <WindowButtons>
          <svg width="7" height="3" viewBox="0 0 7 3">
            <path d="M0 0h7v3H0z" fill="#fff" />
          </svg>
          <svg width="11" height="11" viewBox="0 0 11 11">
            <path d="M3.500 3V.5h7v7H8M.5 3.500h7v7h-7z" fill="none" stroke="#fff" strokeWidth="1.2" />
          </svg>
          <svg width="11" height="11" viewBox="0 0 11 11">
            <path d="M1 1l9 9M10 1l-9 9" stroke="#fff" strokeWidth="1.8" />
          </svg>
        </WindowButtons>
      </TitleRow>
      <TabRow>
        <LogoBox>
          <LogoIcon />
          <LogoCaret />
        </LogoBox>
        {tabs.map(([t, w]) => (
          <RibbonTab key={t} $w={w} $active={t === "Design"}>
            {t}
          </RibbonTab>
        ))}
        <RibbonTab $w={96} $context>
          Specify
        </RibbonTab>
        <FindCommand>
          <BulbIcon />
          Find Command...
        </FindCommand>
        <Perspective>
          <svg width="12" height="12" viewBox="0 0 12 12">
            <circle cx="6" cy="6" r="5" fill="none" stroke="#fff" strokeWidth="1.5" />
            <circle cx="6" cy="6" r="2" fill="#fff" />
          </svg>
          Perspective
          <PerspectiveCaret />
        </Perspective>
      </TabRow>
    </TitleBar>

    <Ribbon>
      <Group $pad={2}>
        <GroupBody>
          <Tool w={52} icon={<HouseIcon />} lines={["Portals"]} caret />
        </GroupBody>
        <GroupLabel>Show</GroupLabel>
      </Group>
      <Group>
        <GroupBody>
          <Tool w={52} icon={<PackageAdd />} lines={["Insert"]} caret />
          <Tool w={34} icon={<PackageEdit />} lines={["Edit"]} caret />
          <InnerRule $gap={7} />
          <Tool w={80} icon={<SpecIcon />} lines={["Specification"]} />
          <SmallTools>
            <SmallTool>
              <MiniWindow />
              List
            </SmallTool>
            <SmallTool>
              <MiniWindow />
              Gantt
            </SmallTool>
          </SmallTools>
        </GroupBody>
        <GroupLabel>Package</GroupLabel>
      </Group>
      <Group $pad={4}>
        <GroupBody>
          <Tool w={48} icon={<ToolboxIcon />} lines={["Toolbox"]} />
          <InnerRule />
          <Tool w={50} icon={<DiagramBig><Plus x={0} y={19} /></DiagramBig>} lines={["Insert"]} caret />
          <Tool w={34} icon={<DiagramBig><Gear x={1} y={19} /></DiagramBig>} lines={["Edit"]} caret />
          <Tool w={50} icon={<DiagramBig><Target /></DiagramBig>} lines={["View", "As"]} inlineCaret />
        </GroupBody>
        <GroupLabel>Diagram</GroupLabel>
      </Group>
      <Group>
        <GroupBody>
          <Tool w={52} icon={<ElementBig><path d="M0 24h9v10l-4-3-5 3z" fill="#c04040" /></ElementBig>} lines={["Insert"]} caret />
          <Tool w={34} icon={<ElementBig><Gear x={0} y={23} /></ElementBig>} lines={["Edit"]} caret />
          <InnerRule $gap={6} />
          <Tool w={64} icon={<PropertiesIcon />} lines={["Properties"]} caret />
          <Tool w={44} icon={<FeaturesIcon />} lines={["Features"]} caret />
          <Tool w={94} icon={<ResponsIcon />} lines={["Responsibilities"]} caret />
        </GroupBody>
        <GroupLabel>Element</GroupLabel>
      </Group>
      <Group $end={7}>
        <GroupBody>
          <Tool w={75} icon={<TraceIcon />} lines={["Traceability"]} />
          <Tool w={36} icon={<MatrixGrid mark="#5f9e80" />} lines={["Matrix"]} />
          <Tool w={52} icon={<MatrixGrid mark="#6fb0d8" corner />} lines={["Gap", "Analysis"]} />
          <Tool w={48} icon={<DecisionIcon />} lines={["Decisions"]} caret />
        </GroupBody>
        <GroupLabel>Impact</GroupLabel>
      </Group>
      <Group>
        <GroupBody>
          <Tool w={67} icon={<TransformIcon />} lines={["Transform"]} caret />
        </GroupBody>
        <GroupLabel>Tools</GroupLabel>
      </Group>
    </Ribbon>

    <AddressBar>
      <Grip />
      <NavButtons>
        <NavCircle />
        <NavCircle light />
      </NavButtons>
      <Crumbs>
        <CrumbArrow />
        {crumbs.map((c) => (
          <React.Fragment key={c}>
            <span>{c}</span>
            <CrumbArrow />
          </React.Fragment>
        ))}
      </Crumbs>
      <FindBox>Find Package</FindBox>
      <AddressTools>
        <Magnifier />
        <DotsIcon />
        <AddressRule />
        <BurgerIcon />
      </AddressTools>
    </AddressBar>

    <Workspace>
      <SideRail>
        <RailStrip />
        <RailText>Team Library</RailText>
      </SideRail>
      <DiagramPanel>
        <DiagramHeader>
          <DoubleRight />
          <HeaderIcon>
            <TreeDiagram />
          </HeaderIcon>
          <HeaderPath>{"TOGAF-ADM.  TOGAF Interface Diagram"}</HeaderPath>
          <HeaderEnd>
            <DoubleLeft />
            <Tri $dir="down" $color="#222" />
            <SmallClose color="#222" />
          </HeaderEnd>
        </DiagramHeader>
        <DiagramBody>
          <MainCanvas>
            <SelectionFrame />
            <ArrowLayer width="616" height="797" viewBox="31 194 616 797">
              <defs>
                <marker id="head" markerUnits="userSpaceOnUse" viewBox="0 0 14 10" refX="13" refY="5" markerWidth="14" markerHeight="10" orient="auto-start-reverse">
                  <path d="M0 0 14 5 0 10 3 5z" fill="#111" />
                </marker>
              </defs>
              {arrows.map((a) => (
                <path
                  key={a.d}
                  d={a.d}
                  fill="none"
                  stroke="#333"
                  markerEnd="url(#head)"
                  markerStart={a.both ? "url(#head)" : undefined}
                />
              ))}
            </ArrowLayer>
            <Bubble $x={353} $y={596.7} $d={113} $core>
              <BubbleLine $bold>Requirements</BubbleLine>
              <BubbleLine $bold>Management</BubbleLine>
            </Bubble>
            {bubbles.map((b) => (
              <Bubble key={b.lines.join()} $x={b.x} $y={b.y} $d={89}>
                {b.lines.map((l, i) => (
                  <BubbleLine key={l} $bold={i === 0} $wide={b.wide || (b.big && i === 0)}>
                    {l}
                  </BubbleLine>
                ))}
              </Bubble>
            ))}
            {handles.map(([x, y]) => (
              <Handle key={`${x}-${y}`} $x={x} $y={y} />
            ))}
            <QuickTools>
              <QuickIcon d="M7 14V1M4.500 4 7 1l2.500 3" />
              <QuickIcon d="M1 9l4-4 5 1-1 5-4 2zM9 6l3-5" />
              <QuickIcon d="M5.500 1a4.500 4.500 0 1 0 .01 0zM9 9l4.500 4.500" />
              <QuickIcon d="M1 3h7v10H1zM8 6l4-4-3 6" />
            </QuickTools>
          </MainCanvas>
          <VScroll gap={2} size={672} />
        </DiagramBody>
        <HScroll gap={1} size={570} />
        <DocTabs>
          <DocTab $w={141}>Architectural Frameworks</DocTab>
          <DocTab $w={124} $active $pad={4}>
            <TreeDiagram />
            *TOGAF-ADM
            <DocTabClose>x</DocTabClose>
          </DocTab>
          <DocTab $w={81} $pad={8}>
            <RedTree />
            Catalogs
          </DocTab>
          <DocTab $w={102}>
            <WizardIcon />
            Model Wizard
          </DocTab>
          <DocTab $w={137}>
            <TreeDiagram />
            Conceptual Framework
          </DocTab>
          <TabArrows>
            <Tri $dir="left" $color="#666" />
            <Tri $dir="right" $color="#666" />
          </TabArrows>
        </DocTabs>
      </DiagramPanel>

      <PhaseGrid>
        <Phase name="A" bottom={7} v={[17, 100]} h={[50, 176]}>
          <MissionBox>
            <Stereotype>«Mission»</Stereotype>
            <ElementName>Architecture Mission</ElementName>
            <MissionDoc>
              <DocIcon />
            </MissionDoc>
            <MissionFlag>A</MissionFlag>
          </MissionBox>
          <PackageBody />
          <PackageTab>Conceptual Framework</PackageTab>
        </Phase>
        <Phase name="B" bottom={7} v={[19, 100]} h={[0, 182]}>
          <NoteBox>
            Business Architecture Models are developed
            <br />
            in this phase.
            <NoteFold width="13" height="14" viewBox="0 0 13 14">
              <path d="M0 0h13v14z" fill="#fff" />
              <path d="M0 0v13h13z" fill="#ddd" stroke="#111" />
            </NoteFold>
          </NoteBox>
          <DiagramLink>
            <svg width="16" height="16" viewBox="0 0 16 16">
              <path d="M6 5h4M3 7v6h6" stroke="#000" fill="none" />
              <rect x="0.5" y="3.5" width="5" height="6" fill="#fff" stroke="#00c" />
              <rect x="10.5" y="0.5" width="5" height="5" fill="#fff" stroke="#000" strokeWidth="1.5" />
              <rect x="10" y="10" width="5" height="5.5" fill="#fff" stroke="#00c" />
            </svg>
            <LinkText>Phase B : Organization Structure</LinkText>
          </DiagramLink>
          <ServiceBox>
            <Stereotype>«BusinessService»</Stereotype>
            <ElementName>BusinessService1</ElementName>
          </ServiceBox>
        </Phase>
        <Phase name="C" bottom={2} v={[12, 103]} h={[10, 176]}>
          <ProjectBox>
            <Stereotype>«Project»</Stereotype>
            <ElementName>Project1</ElementName>
          </ProjectBox>
          <DependencyLine width="16" height="64" viewBox="0 0 16 64">
            <path d="M8 0V61" stroke="#111" strokeDasharray="7 4" />
            <path d="M3 47 8 62l5-15" fill="none" stroke="#111" />
          </DependencyLine>
          <ArtifactFrame>
            <ArtifactTag width="65" height="21" viewBox="0 0 65 21">
              <path d="M0 0h63v4L52 20.500H0z" fill="#f5d9ae" stroke="#111" />
            </ArtifactTag>
            <ArtifactName>Datamap</ArtifactName>
          </ArtifactFrame>
        </Phase>
        <Phase name="D" bottom={2} v={[1, 103]} h={[0, 182]} />
      </PhaseGrid>

      <Browser>
        <BrowserTitle $left={5}>
          <PanelTitle>Project Browser</PanelTitle>
          <PanelButtons />
        </BrowserTitle>
        <BrowserTools>
          <ToolSlot $w={18}>
            <NewFolderIcon />
          </ToolSlot>
          <ToolSlot $w={24}>
            <TreeFolder />
          </ToolSlot>
          <ToolSlot $w={22}>
            <TreeDiagram />
          </ToolSlot>
          <ToolSlot $w={8}>
            <ToolRule />
          </ToolSlot>
          <ToolSlot $w={18}>
            <UpArrow />
          </ToolSlot>
          <ToolSlot $w={28}>
            <DownArrow />
          </ToolSlot>
          <ToolSlot $w={2}>
            <ToolRule />
          </ToolSlot>
          <ToolSlot $w={28}>
            <BurgerIcon />
          </ToolSlot>
          <ToolSlot $w={8}>
            <SmallCaret />
          </ToolSlot>
        </BrowserTools>
        <BrowserTabs>
          <BrowserTab $active>Global</BrowserTab>
          <BrowserTab>Context</BrowserTab>
          <TabNotch width="13" height="7" viewBox="0 0 13 7">
            <path d="M0 6.500 6.500 0 13 6.500" fill="#f0f0f0" stroke="#d6d6d6" />
          </TabNotch>
        </BrowserTabs>
        <TreeArea>
          <Tree>
            {treeRows.map((r, i) => (
              <TreeRow key={i} $level={r.l} $current={r.current}>
                <ToggleSlot>
                  {r.open && <OpenToggle />}
                  {r.closed && (
                    <svg width="8" height="10" viewBox="0 0 8 10">
                      <path d="M1 .5 7 5 1 9.500z" fill="#fff" stroke="#555" />
                    </svg>
                  )}
                </ToggleSlot>
                <NodeIcon>{kindIcon[r.k]}</NodeIcon>
                {r.t}
              </TreeRow>
            ))}
          </Tree>
          <VScroll gap={75} size={118} />
        </TreeArea>
      </Browser>
    </Workspace>

    <StatusBar>
      <StatusCell $w={318}>Architecture Development Method (ADM) Diagram:Phase C:</StatusCell>
      <StatusCell $w={167}>created: 15/02/2017 3:07:02 PM</StatusCell>
      <StatusCell $w={174}>modified: 15/02/2017 3:07:02 PM</StatusCell>
      <StatusCell $w={40}>100%</StatusCell>
      <StatusCell $w={822}>780 x 1134</StatusCell>
      <StatusCell $w={62}>TOGAF</StatusCell>
      <StatusRule />
      <Zoomer>
        −
        <ZoomLine>
          <ZoomThumb />
        </ZoomLine>
        +
      </Zoomer>
      <StatusCell $w={39} $muted>CAP</StatusCell>
      <StatusCell $w={44} $muted>NUM</StatusCell>
      <StatusCell $w={46} $muted>SCRL</StatusCell>
      <StatusCell $w={40} $muted>CLOUD</StatusCell>
    </StatusBar>
    <BottomEdge />
  </Page>
);

export default App;
